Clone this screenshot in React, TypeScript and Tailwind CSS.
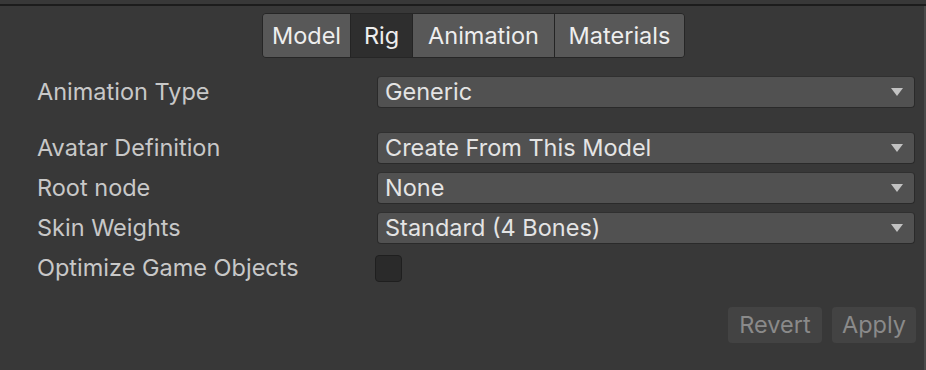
import React from "react";

function Arrow() {
  return (
    <svg width="14" height="10" viewBox="0 0 14 10" className="shrink-0">
      <path d="M1 1 H13 L7 9 Z" fill="#c2c2c2" />
    </svg>
  );
}

function Dropdown({ value }: { value: string }) {
  return (
    <div className="flex h-[32px] w-[538px] items-center justify-between rounded-[4px] border border-[#2a2a2a] border-t-[#303030] bg-[#515151] pl-[7px] pr-[10px] text-[23.5px] text-[#e4e4e4]">
      <span className="leading-none">{value}</span>
      <Arrow />
    </div>
  );
}

function Row({ label, children, className = "" }: { label: string; children: React.ReactNode; className?: string }) {
  return (
    <div className={"flex h-[32px] items-center " + className}>
      <div className="w-[377px] shrink-0 pl-[37px] text-[23.5px] leading-none text-[#c8c8c8]">{label}</div>
      {children}
    </div>
  );
}

export default function App() {
  const tabs = ["Model", "Rig", "Animation", "Materials"];
  return (
    <div
      className="relative h-[370px] w-[926px] overflow-hidden bg-[#383838]"
      style={{ fontFamily: "Inter, 'Noto Sans', sans-serif" }}
    >
      <div className="mt-[4px] h-[2px] w-full bg-[#1c1c1c]" />
      <div className="absolute right-0 top-[6px] h-[364px] w-[2px] bg-[#4a4a4a]" />
      <div className="mt-[7px] flex justify-center pl-[21px]">
        <div className="flex h-[45px] overflow-hidden rounded-[4px] border border-[#262626] text-[23.5px] text-[#eeeeee]">
          {tabs.map((t, i) => (
            <div
              key={t}
              className={
                "flex items-center justify-center " +
                (i > 0 ? "border-l border-[#242424] " : "") +
                (t === "Rig" ? "bg-[#2e2e2e] w-[62px]" : "bg-[#585858] ") +
                (t === "Model" ? "w-[87px]" : t === "Animation" ? "w-[142px]" : t === "Materials" ? "w-[130px]" : "")
              }
            >
              {t}
            </div>
          ))}
        </div>
      </div>
      <div className="mt-[18px] flex flex-col">
        <Row label="Animation Type">
          <Dropdown value="Generic" />
        </Row>
        <Row label="Avatar Definition" className="mt-[24px]">
          <Dropdown value="Create From This Model" />
        </Row>
        <Row label="Root node" className="mt-[8px]">
          <Dropdown value="None" />
        </Row>
        <Row label="Skin Weights" className="mt-[8px]">
          <Dropdown value="Standard (4 Bones)" />
        </Row>
        <Row label="Optimize Game Objects" className="mt-[8px]">
          <div className="-ml-[2px] h-[27px] w-[27px] rounded-[4px] border border-[#1f1f1f] bg-[#2a2a2a]" />
        </Row>
      </div>
      <div className="mt-[23px] flex justify-end gap-[10px] pr-[10px] text-[23.5px] text-[#8a8a8a]">
        <div className="flex h-[36px] w-[94px] items-center justify-center rounded-[4px] bg-[#434343]">Revert</div>
        <div className="flex h-[36px] w-[84px] items-center justify-center rounded-[4px] bg-[#434343]">Apply</div>
      </div>
    </div>
  );
}
